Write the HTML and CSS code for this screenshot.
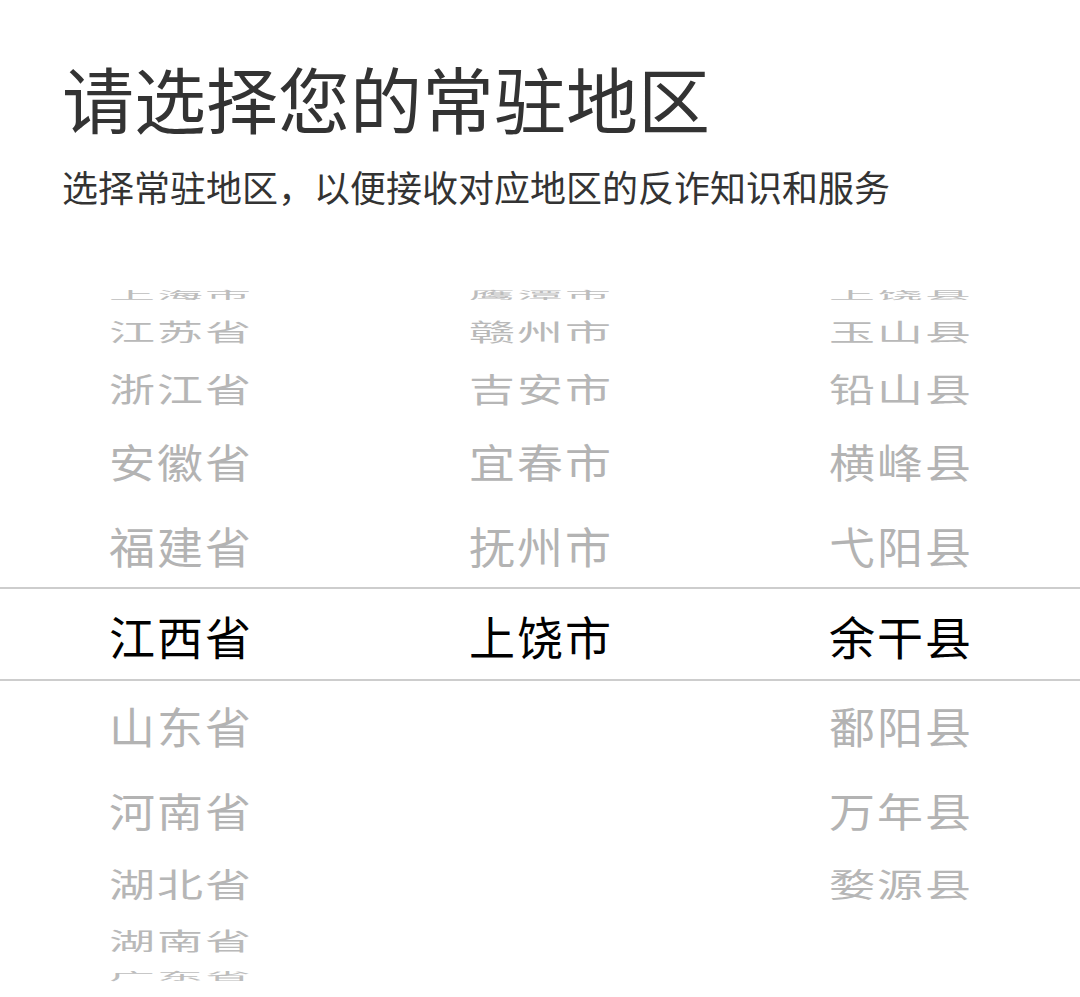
FILE: index.html
```html
<!DOCTYPE html>
<html lang="zh-CN">
<head>
  <meta charset="UTF-8" />
  <meta name="viewport" content="width=device-width, initial-scale=1.0"/>
  <title>选择常驻地区</title>
  <link rel="stylesheet" href="styles.css">
</head>
<body>
  <header class="intro">
    <h1>请选择您的常驻地区</h1>
    <p>选择常驻地区，以便接收对应地区的反诈知识和服务</p>
  </header>

  <!-- Region picker -->
  <div class="picker">
    <div class="band"></div>

    <ul class="wheel">
      <li class="o-5"><span>上海市</span></li>
      <li class="o-4"><span>江苏省</span></li>
      <li class="o-3"><span>浙江省</span></li>
      <li class="o-2"><span>安徽省</span></li>
      <li class="o-1"><span>福建省</span></li>
      <li class="o0"><span>江西省</span></li>
      <li class="o1"><span>山东省</span></li>
      <li class="o2"><span>河南省</span></li>
      <li class="o3"><span>湖北省</span></li>
      <li class="o4"><span>湖南省</span></li>
      <li class="o5"><span>广东省</span></li>
    </ul>

    <ul class="wheel">
      <li class="o-5"><span>鹰潭市</span></li>
      <li class="o-4"><span>赣州市</span></li>
      <li class="o-3"><span>吉安市</span></li>
      <li class="o-2"><span>宜春市</span></li>
      <li class="o-1"><span>抚州市</span></li>
      <li class="o0"><span>上饶市</span></li>
    </ul>

    <ul class="wheel">
      <li class="o-5"><span>上饶县</span></li>
      <li class="o-4"><span>玉山县</span></li>
      <li class="o-3"><span>铅山县</span></li>
      <li class="o-2"><span>横峰县</span></li>
      <li class="o-1"><span>弋阳县</span></li>
      <li class="o0"><span>余干县</span></li>
      <li class="o1"><span>鄱阳县</span></li>
      <li class="o2"><span>万年县</span></li>
      <li class="o3"><span>婺源县</span></li>
    </ul>
  </div>
</body>
</html>
```

FILE: styles.css
```css
* {
  margin: 0;
  padding: 0;
  box-sizing: border-box;
}

body {
  font-family: "Noto Sans CJK SC", "Noto Sans", sans-serif;
  background: #fff;
  color: #333;
  width: 1080px;
  height: 997px;
  overflow: hidden;
}

.intro {
  padding: 54px 0 0 62px;
}

.intro h1 {
  font-size: 72px;
  font-weight: 400;
  line-height: 86px;
  color: #333;
}

.intro p {
  font-size: 36px;
  line-height: 50px;
  margin-top: 21px;
  color: #333;
}

.picker {
  position: relative;
  margin-top: 72px;
  display: grid;
  grid-template-columns: repeat(3, 1fr);
  height: 703px;
}

/* selection lines */
.band {
  position: absolute;
  left: 0;
  right: 0;
  top: 304px;
  height: 94px;
  border-top: 2px solid #cdcdcd;
  border-bottom: 2px solid #cdcdcd;
}

.wheel {
  list-style: none;
  display: flex;
  flex-direction: column;
  align-items: center;
}

.wheel li {
  display: flex;
  align-items: center;
  justify-content: center;
  overflow: hidden;
  width: 100%;
  color: #b3b3b3;
}

.wheel span {
  font-size: 46px;
  line-height: 1;
  letter-spacing: 2px;
  display: block;
  margin-right: -2px;
}

.wheel .o0 { height: 92px; color: #000; }
.wheel .o-1, .wheel .o1 { height: 88px; }
.wheel .o-2, .wheel .o2 { height: 81px; }
.wheel .o-3, .wheel .o3 { height: 65px; }
.wheel .o-4, .wheel .o4 { height: 49px; }
.wheel .o-5, .wheel .o5 { height: 23px; }

.wheel .o-1 span, .wheel .o1 span { transform: scaleY(0.95); }
.wheel .o-2 span, .wheel .o2 span { transform: scaleY(0.86); }
.wheel .o-3 span, .wheel .o3 span { transform: scaleY(0.72); color: #b6b6b6; }
.wheel .o-4 span, .wheel .o4 span { transform: scaleY(0.52); color: #b9b9b9; }
.wheel .o-5 span, .wheel .o5 span { transform: scaleY(0.22); color: #bdbdbd; }
```
